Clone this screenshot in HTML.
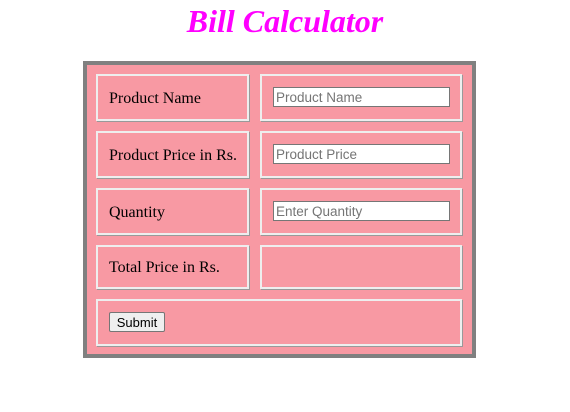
<!DOCTYPE html>
<html><head><style>
body{margin:0;width:570px;height:412px;background:#fff;position:relative;font-family:"Liberation Serif",serif;}
h1{position:absolute;top:3px;left:0;width:570px;margin:0;text-align:center;font-size:32px;font-style:italic;font-weight:bold;color:#f0f;}
.outer{position:absolute;left:83px;top:61px;width:385px;height:289px;border:4px solid #808080;background:#f899a3;}
.c{position:absolute;box-sizing:border-box;border:2px solid #eee;box-shadow:1px 1px 0 #999;font-size:16px;color:#000;display:flex;align-items:center;padding-left:11px;padding-top:2px;}
input{position:absolute;box-sizing:border-box;width:177px;height:20px;border:1px solid #767676;background:#fff;font-family:"Liberation Sans",sans-serif;font-size:13.5px;padding:0 2px;color:#000;}
input::placeholder{color:#757575;}
button{position:absolute;left:109px;top:312px;width:56px;height:20px;font-family:"Liberation Sans",sans-serif;font-size:13px;background:#efefef;border:1px solid #767676;border-radius:2px;padding:0;}
</style></head><body>
<h1>Bill Calculator</h1>
<div class="outer"></div>
<div class="c" style="left:96px;top:74px;width:153px;height:47px">Product Name</div>
<div class="c" style="left:260px;top:74px;width:202px;height:47px"></div>
<div class="c" style="left:96px;top:131px;width:153px;height:47px">Product Price in Rs.</div>
<div class="c" style="left:260px;top:131px;width:202px;height:47px"></div>
<div class="c" style="left:96px;top:188px;width:153px;height:47px">Quantity</div>
<div class="c" style="left:260px;top:188px;width:202px;height:47px"></div>
<div class="c" style="left:96px;top:245px;width:153px;height:44px">Total Price in Rs.</div>
<div class="c" style="left:260px;top:245px;width:202px;height:44px"></div>
<div class="c" style="left:96px;top:299px;width:366px;height:47px"></div>
<input style="left:273px;top:87px" placeholder="Product Name">
<input style="left:273px;top:144px" placeholder="Product Price">
<input style="left:273px;top:201px" placeholder="Enter Quantity">
<button>Submit</button>
</body></html>
